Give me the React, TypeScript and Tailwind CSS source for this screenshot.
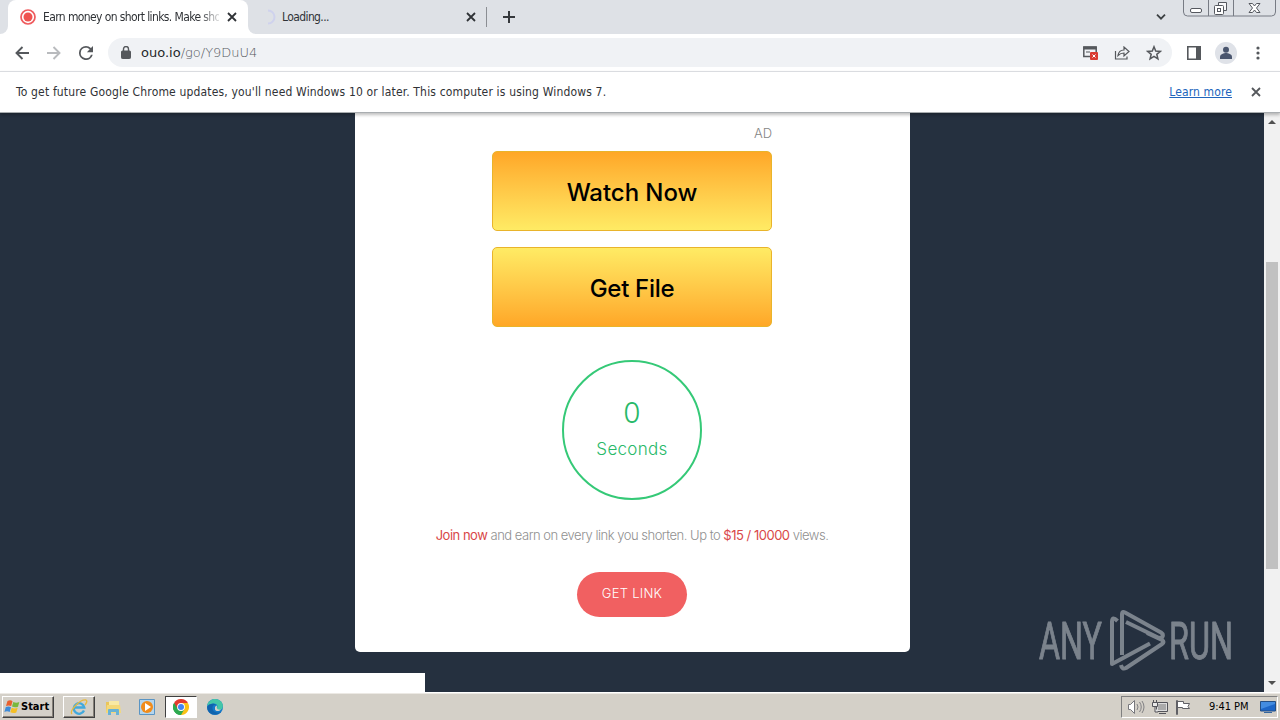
import type { ReactNode } from 'react';

function Close({ className = '' }: { className?: string }) {
  return (
    <svg viewBox="0 0 10 10" className={`size-2.5 shrink-0 ${className}`} fill="none" stroke="currentColor" strokeWidth="1.8">
      <path d="M1 1l8 8M9 1l-8 8" />
    </svg>
  );
}

function TabStrip() {
  return (
    <header className="relative flex h-[34px] items-start bg-[#dee1e6] text-xs text-[#2f3236]">
      <div className="flex h-[34px] w-2 items-end bg-white"><i className="h-[34px] w-2 rounded-br-lg bg-[#dee1e6]" /></div>
      <div className="flex h-[34px] w-[240px] items-center rounded-t-lg bg-white pl-3">
        <svg viewBox="0 0 16 16" className="size-4 shrink-0">
          <circle cx="8" cy="8" r="7" fill="#fff" stroke="#ef5b5e" strokeWidth="1.7" />
          <circle cx="8" cy="8" r="4.5" fill="#ef5350" />
        </svg>
        <div className="ml-[7px] w-[176px] whitespace-nowrap tracking-[-0.61px] [mask-image:linear-gradient(to_right,black_156px,transparent_180px)]">
          Earn money on short links. Make sho
        </div>
        <Close className="ml-2" />
      </div>
      <div className="h-[34px] w-2 bg-white"><i className="block h-[34px] w-2 rounded-bl-lg bg-[#dee1e6]" /></div>
      <div className="flex h-[34px] flex-1 items-center">
        <svg viewBox="0 0 16 16" className="ml-1 size-4" fill="none" stroke="#cfd2ed" strokeWidth="2">
          <path d="M8 1.5a6.500 6.500 0 0 1 0 13" />
        </svg>
        <span className="ml-[6px] w-[184px] tracking-[-0.6px]">Loading...</span>
        <Close />
        <i className="ml-[10px] h-5 w-px bg-[#8b8e93]" />
        <svg viewBox="0 0 12 12" className="ml-4 size-3" stroke="#35383c" strokeWidth="2"><path d="M6 0v12M0 6h12" /></svg>
        <svg viewBox="0 0 10 6" className="ml-auto mr-[17px] h-[6px] w-[10px]" fill="none" stroke="#3c4043" strokeWidth="1.8"><path d="M1 .7l4 4 4-4" /></svg>
        <WindowButtons />
      </div>
    </header>
  );
}

function WindowButtons() {
  return (
    <svg viewBox="0 0 94 34" className="mr-[3px] h-[34px] w-[94px]" fill="none" stroke="#777b84">
      <path d="M.5 0v12q0 4 4 4h84q4 0 4-4V0M25.500 0v16M50.500 0v16" />
      <rect x="7.500" y="8.500" width="11" height="4" rx="1.500" fill="#fff" stroke="#55585f" />
      <path d="M35.500 5V2.500h8v8H41" fill="#f8f8fa" stroke="#55585f" />
      <rect x="31.500" y="5.500" width="9" height="9" rx="1" fill="#fff" stroke="#55585f" />
      <rect x="34.500" y="8.500" width="3" height="3" stroke="#55585f" />
      <path d="M66 3.500h3.500l2 2.500 2-2.500H77L73.500 8l3.500 4.500h-3.500l-2-2.500-2 2.500H66L69.500 8z" fill="#fff" stroke="#55585f" />
    </svg>
  );
}

function Toolbar() {
  return (
    <nav className="flex h-[37px] items-center bg-white text-[#55585c]">
      <svg viewBox="0 0 14 14" className="ml-[15px] size-[14px]" fill="none" stroke="currentColor" strokeWidth="1.9"><path d="M14 7H1.500M7.500 1l-6 6 6 6" /></svg>
      <svg viewBox="0 0 14 14" className="ml-[18px] size-[14px]" fill="none" stroke="#b9bbbe" strokeWidth="1.9"><path d="M0 7h12.500M6.500 1l6 6-6 6" /></svg>
      <svg viewBox="4 4 16 16" className="ml-[18px] size-[14px]" fill="currentColor">
        <path d="M17.650 6.350A7.960 7.960 0 0 0 12 4a8 8 0 1 0 7.730 10h-2.080A6 6 0 1 1 12 6c1.660 0 3.140.69 4.220 1.780L13 11h7V4z" />
      </svg>
      <div className="ml-[15px] flex h-[29px] w-[1064px] items-center rounded-full bg-[#f0f2f5] pl-[13px] pr-[10px]">
        <svg viewBox="0 0 10 13" className="h-[13px] w-[10px]" fill="none" stroke="currentColor">
          <rect x=".5" y="5" width="9" height="7.500" rx=".8" fill="currentColor" />
          <path d="M2.500 5V3a2.500 2.500 0 0 1 5 0v2" strokeWidth="1.400" />
        </svg>
        <span className="ml-[10px] font-['DejaVu_Sans',sans-serif] text-[13px] font-extralight text-[#55595e]"><b className="font-normal text-[#25282b]">ouo.io</b>/go/Y9DuU4</span>
        <svg viewBox="0 0 16 15" className="ml-auto h-[15px] w-4" fill="none" stroke="currentColor">
          <path d="M8 11.500H1.800V2h12.400v5" strokeWidth="1.500" /><path d="M1.500 3h13" strokeWidth="3" /><path d="M4 7h4" />
          <rect x="8" y="7" width="8" height="8" rx="1" fill="#d93b32" stroke="none" /><path d="M10.500 9.500l3 3m0-3l-3 3" stroke="#fff" />
        </svg>
        <svg viewBox="0 0 16 14" className="ml-4 h-[14px] w-4" fill="none" stroke="currentColor" strokeWidth="1.200">
          <path d="M1.500 5v8H13v-2.500M4 9.500C4.500 6 6.500 4 10 4V1l5 4.500L10 10V7C7.500 7 5.500 8 4 9.500z" />
        </svg>
        <svg viewBox="0 0 16 16" className="ml-4 size-4" fill="none" stroke="currentColor" strokeWidth="1.500">
          <path d="M8 1.800l1.700 4.300 4.600.3-3.500 2.900 1.100 4.500L8 11.300l-3.900 2.500 1.100-4.500-3.500-2.900 4.600-.3z" />
        </svg>
      </div>
      <svg viewBox="0 0 14 14" className="ml-[15px] size-[14px]" fill="none" stroke="currentColor" strokeWidth="1.600"><path d="M.8.8h12.400v12.400H.8z" /><path d="M9 1h4v12H9z" fill="currentColor" stroke="none" /></svg>
      <svg viewBox="0 0 22 22" className="ml-[14px] size-[22px]">
        <circle cx="11" cy="11" r="11" fill="#dfe2e8" /><circle cx="11" cy="7.800" r="3" fill="#4a566e" /><path d="M5 17v-2c0-3 4-4 6-4s6 1 6 4v2z" fill="#4a566e" />
      </svg>
      <svg viewBox="0 0 4 14" className="ml-[19px] h-[14px] w-1" fill="currentColor"><circle cx="2" cy="2" r="1.600" /><circle cx="2" cy="7" r="1.600" /><circle cx="2" cy="12" r="1.600" /></svg>
    </nav>
  );
}

function UpdateBar() {
  return (
    <div className="relative z-10 flex h-[42px] items-center border-y border-t-[#dadce0] border-b-[#a9adb0] bg-white pl-4 text-[12px] text-[#303236] shadow-[0_2px_3px_rgba(0,0,0,0.25)]">
      <span className="whitespace-nowrap tracking-[0.162px]">To get future Google Chrome updates, you'll need Windows 10 or later. This computer is using Windows 7.</span>
      <a className="ml-auto tracking-[0.12px] text-[#2064bc] underline">Learn more</a>
      <Close className="ml-[19px] mr-[19px] text-[#55585c]" />
    </div>
  );
}

function BigButton({ children, className }: { children: ReactNode; className: string }) {
  return (
    <button className={`flex h-20 w-[280px] items-center justify-center rounded-[5px] border border-[#e9b42b] pt-[3px] text-2xl font-medium text-black ${className}`}>
      {children}
    </button>
  );
}

function AnyRun() {
  return (
    <svg viewBox="0 0 200 64" className="absolute left-[1038px] top-[496px] h-16 w-[200px] opacity-60" fill="none" stroke="#b5bac0" strokeWidth="4" strokeLinejoin="round">
      <g fill="#b5bac0" strokeWidth="1" fontFamily="Roboto, sans-serif" fontSize="52">
        <text x="1" y="50" textLength="63" lengthAdjust="spacingAndGlyphs">ANY</text>
        <text x="131" y="50" textLength="64" lengthAdjust="spacingAndGlyphs">RUN</text>
      </g>
      <path d="M79.500 12Q74 6.500 74 13v42l38-20.500" />
      <path d="M84 46V5q0-3 3-1.500l36 20q3 2 1 5l-3 .5L88 13" />
      <path d="M109 24l15 7q3 2 0 4L88 59q-4 2-5-3" />
    </svg>
  );
}

function Page() {
  return (
    <main className="relative flex h-[579px] bg-[#25303f] font-[Inter,sans-serif]">
      <div className="flex flex-1 justify-center">
        <section className="ml-px flex h-[539px] w-[555px] flex-col items-center rounded-b-[5px] bg-white pr-px">
          <div className="mt-[11px] h-[27px] w-[280px] text-right text-[13px] font-light leading-[18px] text-[#858585]">AD</div>
          <BigButton className="bg-linear-to-b from-[#ffa726] to-[#ffeb64] tracking-[-0.05px]">Watch Now</BigButton>
          <BigButton className="mt-4 bg-linear-to-t from-[#ffa726] to-[#ffeb64] tracking-[-0.3px]">Get File</BigButton>
          <div className="mt-[33px] flex h-[140px] w-[140px] flex-col items-center rounded-full border-2 border-[#35c977] text-[#28b969]">
            <span className="mt-[33px] text-[28px] leading-9 font-light">0</span>
            <span className="mt-[6px] text-[17px] leading-6 font-light tracking-[0.3px]">Seconds</span>
          </div>
          <p className="mt-[25px] whitespace-nowrap text-[13px] leading-5 font-light tracking-[-0.49px] text-[#909090]">
            <span className="font-normal text-[#d94848]">Join now</span> and earn on every link you shorten. Up to <span className="font-normal text-[#d94848]">$15 / 10000</span> views.
          </p>
          <button className="mt-[27px] h-[45px] w-[110px] rounded-full bg-[#f16061] pb-[2px] text-[13px] font-light tracking-[0.25px] text-white">GET LINK</button>
        </section>
      </div>
      <aside className="flex w-4 flex-col items-center bg-[#f1f1f1]">
        <svg viewBox="0 0 8 4" className="mt-[7px] h-1 w-2 shrink-0" fill="#505050"><path d="M0 4l4-4 4 4z" /></svg>
        <i className="mt-[138px] h-[307px] w-3 bg-[#c1c1c1]" />
        <svg viewBox="0 0 8 4" className="mb-[7px] mt-auto h-1 w-2 shrink-0" fill="#505050"><path d="M0 0l4 4 4-4z" /></svg>
      </aside>
      <AnyRun />
      <div className="absolute bottom-0 left-0 h-[19px] w-[425px] bg-white" />
    </main>
  );
}

function Taskbar() {
  return (
    <footer className="flex h-7 items-center border-t border-white bg-[#d4d0c8] pt-px text-[11px] text-black shadow-[inset_0_1px_0_#ece9e4]">
      <button className="ml-[2px] flex h-[22px] w-[52px] items-center border border-b-[#404040] border-l-white border-r-[#404040] border-t-white pl-px font-bold shadow-[inset_-1px_-1px_0_#858078]">
        <svg viewBox="0 0 16 16" className="size-4 shrink-0">
          <path d="M3.500 2q3-1.500 5 .2L7.200 7Q4.500 6 2 7z" fill="#e9602d" /><path d="M9.300 3q3 1.500 6 0L14 7.700q-3 1.300-6-.2z" fill="#79b83d" />
          <path d="M1.800 8q3-1.200 5.200.2L5.700 13Q3 11.500.4 13z" fill="#3e8bd8" /><path d="M7.700 8.700q3 1.500 6 0l-1.400 4.800q-3 1.300-6-.2z" fill="#f5bf25" />
        </svg>
        <span className="ml-px">Start</span>
      </button>
      <div className="ml-[9px] flex h-[22px] w-8 items-center justify-center border border-b-[#404040] border-l-white border-r-[#404040] border-t-white shadow-[inset_-1px_-1px_0_#858078]">
        <svg viewBox="0 0 18 18" className="size-[18px]" fill="none">
          <path d="M14 12.500A5.300 5.300 0 1 1 14.300 9.500H5" stroke="#42a9dc" strokeWidth="2.300" />
          <path d="M2 16C-1 13 10 1 16 2q2 1-1 5" stroke="#e7b93d" strokeWidth="1.300" />
        </svg>
      </div>
      <svg viewBox="0 0 17 17" className="ml-[10px] size-[17px]">
        <path d="M1 3h5l1 2h7v9H1z" fill="#e9c55b" /><path d="M4 2h10v8H4z" fill="#f9e9a4" /><path d="M2 6h13l1 8H1z" fill="#f4d879" /><path d="M3 16v-5q0-1 1-1h9q1 0 1 1v5h-3v-3H6v3z" fill="#68b2d5" />
      </svg>
      <svg viewBox="0 0 16 16" className="ml-[17px] size-4">
        <path d="M.5.5h15v15H.5z" fill="#b4d5ed" stroke="#5a95c4" /><circle cx="8" cy="8" r="6" fill="#f18c1b" /><path d="M6 4l6 4-6 4z" fill="#fff" />
      </svg>
      <div className="ml-[10px] flex h-[22px] w-8 items-center justify-center border border-b-white border-l-[#404040] border-r-white border-t-[#404040] bg-white">
        <svg viewBox="0 0 16 16" className="size-4">
          <path d="M8 8L1.070 4A8 8 0 0 1 14.930 4z" fill="#e33b2e" /><path d="M8 8l6.930-4A8 8 0 0 1 8 16z" fill="#fbc116" /><path d="M8 8v8A8 8 0 0 1 1.070 4z" fill="#2da94f" />
          <path d="M8 4h6.930L11.500 10z" fill="#fbc116" /><path d="M1.070 4L4.500 10 8 8V4z" fill="#e33b2e" /><path d="M1.070 4l3.500 6L8 12l3.500-2L8 16A8 8 0 0 1 1.070 4z" fill="#2da94f" />
          <circle cx="8" cy="8" r="3.900" fill="#fff" /><circle cx="8" cy="8" r="3" fill="#4285f4" />
        </svg>
      </div>
      <svg viewBox="0 0 16 16" className="ml-[10px] size-4">
        <circle cx="8" cy="8" r="8" fill="#1479c9" /><path d="M.2 7C1 1 7-1 11 .6c5 2 6 7 3.800 9.400-2 2-6 1-5-1 2-3-1-5-4-4.500C3 4.800 1 6 .2 7z" fill="#44c6a8" />
        <path d="M.2 8c2-4 7-4 9-2-4-1-5 4-2 6.500 2 1.500 5 1.500 7.500 0C10 18 0 16 .2 8z" fill="#1063ad" /><path d="M8 8q2-3 2 0c-1 2 2 3 4 2.500-2 2-5 2-6 0z" fill="#d4d0c8" />
      </svg>
      <div className="ml-auto mr-[2px] flex h-[22px] w-[157px] items-center border border-b-white border-l-[#808080] border-r-white border-t-[#808080] pl-[5px]">
        <svg viewBox="0 0 18 16" className="h-4 w-[18px]" fill="#fff" stroke="#77777c"><path d="M1.500 5.500h2l4-4v13l-4-4h-2z" /><path d="M10 5q2 3 0 6M12.500 3q3.500 5 0 10M15 2q4 6 0 12" fill="none" strokeWidth=".9" /></svg>
        <svg viewBox="0 0 18 16" className="ml-[6px] h-4 w-[18px]" fill="#e8e8e8" stroke="#54545a"><path d="M5.500 3.500h11v9h-11z" fill="#ddd" /><path d="M7 5h8v6H7z" fill="#aaa" stroke="none" /><path d="M8 14.500h7M1.500 3.500h5v4h-5zM2.500 1v2M5.500 1v2M4 8v5h3" /></svg>
        <svg viewBox="0 0 16 16" className="ml-[6px] size-4" fill="#fff" stroke="#606065"><path d="M1.500 1.500h1v14h-1zM2.500 2.500h6v2h6l-1.500 3 1.500 2h-7v-1h-5z" /></svg>
        <span className="ml-[18px] whitespace-nowrap tracking-[-0.05px]">9:41 PM</span>
        <svg viewBox="0 0 16 14" className="ml-auto mr-px h-[14px] w-4"><path d="M.5 1.500h15v9.500H.5z" fill="#1d66c7" stroke="#244f85" /><path d="M1 2h14v2L1 9z" fill="#438ce0" /><path d="M4 12h8v1H4z" fill="#34669f" /></svg>
      </div>
    </footer>
  );
}

export default function App() {
  return (
    <div className="flex h-[720px] w-[1280px] flex-col overflow-hidden font-['DejaVu_Sans_Condensed','DejaVu_Sans',sans-serif]">
      <TabStrip />
      <Toolbar />
      <UpdateBar />
      <Page />
      <Taskbar />
    </div>
  );
}
